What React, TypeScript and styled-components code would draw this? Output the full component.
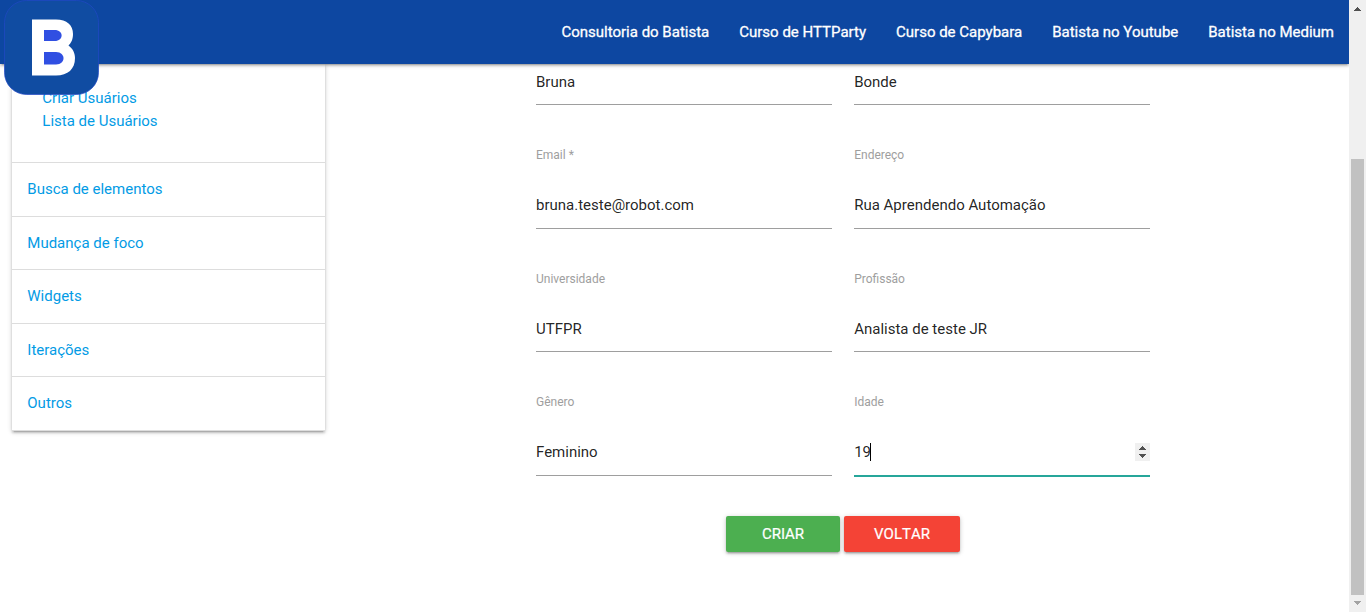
import React from "react";
import styled, { createGlobalStyle, css } from "styled-components";

const GlobalStyle = createGlobalStyle`
  *, *::before, *::after { box-sizing: border-box; }
  body {
    margin: 0;
    overflow: hidden;
    background: #fff;
    font-family: Roboto, "Liberation Sans", sans-serif;
    font-size: 15px;
    line-height: 22.5px;
    color: rgba(0, 0, 0, 0.87);
  }
  a { text-decoration: none; }
`;

const Screen = styled.div`
  display: flex;
  height: 612px;
  overflow: hidden;
`;

const Page = styled.div`
  flex: 1;
  min-width: 0;
  overflow: hidden;
`;

const NavBar = styled.nav`
  position: relative;
  z-index: 2;
  display: flex;
  justify-content: flex-end;
  height: 64px;
  background: #0d47a1;
  box-shadow: 0 2px 2px 0 rgba(0, 0, 0, 0.14), 0 3px 1px -2px rgba(0, 0, 0, 0.12),
    0 1px 5px 0 rgba(0, 0, 0, 0.2);
`;

const Logo = styled.svg`
  position: absolute;
  left: 4px;
  top: 0;
  width: 95px;
  height: 95px;
`;

const NavLink = styled.a`
  padding: 0 15px;
  line-height: 64px;
  color: #fff;
  -webkit-text-stroke: 0.3px #fff;
  white-space: nowrap;
`;

const Content = styled.main`
  display: flex;
  align-items: flex-start;
`;

const SideMenu = styled.aside`
  width: 313px;
  margin-left: 12px;
  box-shadow: 0 2px 2px 0 rgba(0, 0, 0, 0.14), 0 3px 1px -2px rgba(0, 0, 0, 0.12),
    0 1px 5px 0 rgba(0, 0, 0, 0.2);
`;

const SubMenu = styled.div`
  display: flex;
  flex-direction: column;
  height: 99px;
  padding: 23px 30px 0 30.3px;
  border-bottom: 1px solid #ddd;
`;

const MenuLink = styled.a`
  color: #039be5;
  line-height: 23px;
`;

const MenuItem = styled.div`
  display: flex;
  align-items: flex-start;
  height: 53.5px;
  padding: 15.1px 15px 0 15.3px;
  border-bottom: 1px solid #ddd;
`;

const Form = styled.form`
  width: 614px;
  margin-left: 211px;
`;

const Row = styled.div`
  display: grid;
  grid-template-columns: 296px 296px;
  column-gap: 22.2px;
`;

const Field = styled.div<{ $height: number }>`
  display: flex;
  flex-direction: column;
  justify-content: flex-end;
  height: ${(p) => p.$height}px;
`;

const Label = styled.label`
  margin-bottom: 18.6px;
  font-size: 12px;
  line-height: 18px;
  color: #9e9e9e;
`;

const Value = styled.div<{ $active?: boolean; $compact?: boolean }>`
  display: flex;
  flex: none;
  align-items: center;
  height: ${(p) => (p.$compact ? 44.6 : 46)}px;
  border-bottom: 1px solid #9e9e9e;
  ${(p) =>
    p.$active &&
    css`
      border-bottom-color: #26a69a;
      box-shadow: 0 1px 0 0 #26a69a;
    `}
`;

const Caret = styled.span`
  width: 1px;
  height: 18px;
  margin-left: -1px;
  background: #000;
`;

const Spinner = styled.svg`
  width: 15px;
  height: 18px;
  margin-left: auto;
  background: #f0f0f0;
`;

const Actions = styled.div`
  display: flex;
  gap: 4px;
  margin: 40.2px 0 0 190px;
`;

const Button = styled.button<{ $color: string; $width: number }>`
  width: ${(p) => p.$width}px;
  height: 36px;
  padding: 0;
  border: 0;
  border-radius: 2px;
  background: ${(p) => p.$color};
  color: #fff;
  font: 400 15px/36px Roboto, "Liberation Sans", sans-serif;
  font-kerning: none;
  -webkit-text-stroke: 0.2px #fff;
  text-transform: uppercase;
  box-shadow: 0 2px 2px 0 rgba(0, 0, 0, 0.14), 0 3px 1px -2px rgba(0, 0, 0, 0.12),
    0 1px 5px 0 rgba(0, 0, 0, 0.2);
`;

const ScrollBar = styled.div`
  display: flex;
  flex-direction: column;
  align-items: center;
  width: 17px;
  background: #f0f0f0;
`;

const ScrollArrow = styled.svg`
  width: 17px;
  height: 17px;
  flex: none;
`;

const Thumb = styled.div`
  width: 13px;
  height: 436px;
  margin-top: 142px;
  background: #c1c1c1;
`;

type FieldData = { label?: string; value: string; active?: boolean };

const navLinks = [
  "Consultoria do Batista",
  "Curso de HTTParty",
  "Curso de Capybara",
  "Batista no Youtube",
  "Batista no Medium",
];

const menu = ["Busca de elementos", "Mudança de foco", "Widgets", "Iterações", "Outros"];

const rows: FieldData[][] = [
  [{ value: "Bruna" }, { value: "Bonde" }],
  [
    { label: "Email *", value: "bruna.teste@robot.com" },
    { label: "Endereço", value: "Rua Aprendendo Automação" },
  ],
  [
    { label: "Universidade", value: "UTFPR" },
    { label: "Profissão", value: "Analista de teste JR" },
  ],
  [
    { label: "Gênero", value: "Feminino" },
    { label: "Idade", value: "19", active: true },
  ],
];

export default function App() {
  return (
    <Screen>
      <GlobalStyle />
      <Page>
        <NavBar>
          <Logo viewBox="0 0 95 95">
            <rect x="0.5" y="0.5" width="94" height="94" rx="22" fill="#104ca2" stroke="#2148c6" strokeWidth="0.7" />
            <path
              d="M28 19.5H52C63 19.5 69 25 69 34C69 39.5 67 43 64.5 45.5C68.5 48.5 71 52.5 71 58C71 69 64 75.5 52 75.5H28Z"
              fill="#fff"
            />
            <path d="M40 30H50.5C60 30 60 41 50.5 41H40Z" fill="#304fe2" />
            <path d="M40 52H52C62 52 62 64.5 52 64.5H40Z" fill="#304fe2" />
          </Logo>
          {navLinks.map((text) => (
            <NavLink key={text}>{text}</NavLink>
          ))}
        </NavBar>
        <Content>
          <SideMenu>
            <SubMenu>
              <MenuLink>Criar Usuários</MenuLink>
              <MenuLink>Lista de Usuários</MenuLink>
            </SubMenu>
            {menu.map((text) => (
              <MenuItem key={text}>
                <MenuLink>{text}</MenuLink>
              </MenuItem>
            ))}
          </SideMenu>
          <Form>
            {rows.map((fields, i) => (
              <Row key={i}>
                {fields.map((f) => (
                  <Field key={f.value} $height={f.label ? 123.6 : 41.2}>
                    {f.label && <Label>{f.label}</Label>}
                    <Value $active={f.active} $compact={!f.label}>
                      {f.value}
                      {f.active && (
                        <>
                          <Caret />
                          <Spinner viewBox="0 0 15 18" shapeRendering="crispEdges">
                            <path d="M7 3h1v1h1v1h1v1h1v1H4V6h1V5h1V4h1z" fill="#505050" />
                            <path d="M4 11h7v1h-1v1H9v1H8v1H7v-1H6v-1H5v-1H4z" fill="#505050" />
                          </Spinner>
                        </>
                      )}
                    </Value>
                  </Field>
                ))}
              </Row>
            ))}
            <Actions>
              <Button type="button" $color="#4caf50" $width={114}>
                Criar
              </Button>
              <Button type="button" $color="#f44336" $width={116}>
                Voltar
              </Button>
            </Actions>
          </Form>
        </Content>
      </Page>
      <ScrollBar>
        <ScrollArrow viewBox="0 0 17 17" shapeRendering="crispEdges">
          <path d="M8 7h1v1h1v1h1v1h1v1H5v-1h1V9h1V8h1z" fill="#505050" />
        </ScrollArrow>
        <Thumb />
        <ScrollArrow viewBox="0 0 17 17" shapeRendering="crispEdges">
          <path d="M5 6h7v1h-1v1h-1v1H9v1H8V9H7V8H6V7H5z" fill="#a3a3a3" />
        </ScrollArrow>
      </ScrollBar>
    </Screen>
  );
}
